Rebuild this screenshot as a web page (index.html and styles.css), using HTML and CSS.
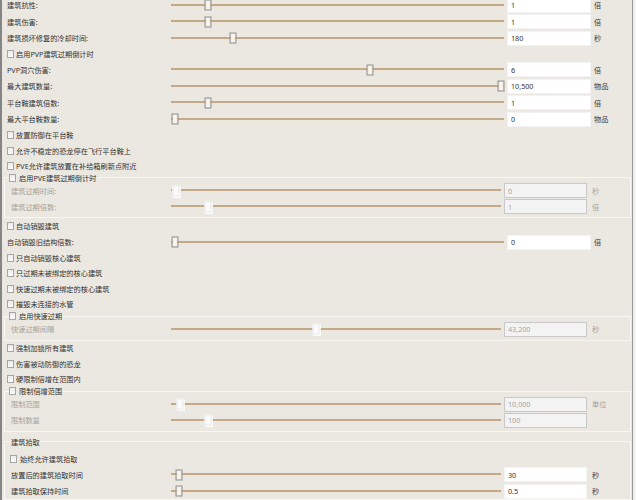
FILE: index.html
```html
<!DOCTYPE html>
<html>
<head>
    <meta charset="utf-8">
    <title>建筑设置</title>
    <link rel="stylesheet" href="styles.css">
</head>
<body>
    <div class="panel">
        <div class="row"><span class="name">建筑抗性:</span><div class="slider"><div class="rail"><span class="thumb" style="left: 10.2%"></span></div></div><input class="num" value="1"><span class="unit">倍</span></div>
        <div class="row"><span class="name">建筑伤害:</span><div class="slider"><div class="rail"><span class="thumb" style="left: 10.2%"></span></div></div><input class="num" value="1"><span class="unit">倍</span></div>
        <div class="row"><span class="name">建筑损坏修复的冷却时间:</span><div class="slider"><div class="rail"><span class="thumb" style="left: 18%"></span></div></div><input class="num" value="180"><span class="unit">秒</span></div>
        <label class="check"><input type="checkbox">启用PVP建筑过期倒计时</label>
        <div class="row"><span class="name">PVP洞穴伤害:</span><div class="slider"><div class="rail"><span class="thumb" style="left: 60%"></span></div></div><input class="num" value="6"><span class="unit">倍</span></div>
        <div class="row"><span class="name">最大建筑数量:</span><div class="slider"><div class="rail"><span class="thumb" style="left: 100%"></span></div></div><input class="num" value="10,500"><span class="unit">物品</span></div>
        <div class="row"><span class="name">平台鞍建筑倍数:</span><div class="slider"><div class="rail"><span class="thumb" style="left: 10.2%"></span></div></div><input class="num" value="1"><span class="unit">倍</span></div>
        <div class="row"><span class="name">最大平台鞍数量:</span><div class="slider"><div class="rail"><span class="thumb" style="left: 0%"></span></div></div><input class="num" value="0"><span class="unit">物品</span></div>
        <label class="check"><input type="checkbox">放置防御在平台鞍</label>
        <label class="check"><input type="checkbox">允许不稳定的恐龙停在飞行平台鞍上</label>
        <label class="check"><input type="checkbox">PVE允许建筑放置在补给箱刷新点附近</label>

        <fieldset class="group" disabled>
            <legend><label class="check"><input type="checkbox">启用PVE建筑过期倒计时</label></legend>
            <div class="row"><span class="name">建筑过期时间:</span><div class="slider"><div class="rail"><span class="thumb" style="left: 0.5%"></span></div></div><input class="num" value="0" disabled><span class="unit">秒</span></div>
            <div class="row"><span class="name">建筑过期倍数:</span><div class="slider"><div class="rail"><span class="thumb" style="left: 10.5%"></span></div></div><input class="num" value="1" disabled><span class="unit">倍</span></div>
        </fieldset>

        <label class="check"><input type="checkbox">自动销毁建筑</label>
        <div class="row"><span class="name">自动销毁旧结构倍数:</span><div class="slider"><div class="rail"><span class="thumb" style="left: 0%"></span></div></div><input class="num" value="0"><span class="unit">倍</span></div>
        <label class="check"><input type="checkbox">只自动销毁核心建筑</label>
        <label class="check"><input type="checkbox">只过期未被绑定的核心建筑</label>
        <label class="check"><input type="checkbox">快速过期未被绑定的核心建筑</label>
        <label class="check"><input type="checkbox">摧毁未连接的水管</label>

        <fieldset class="group" disabled>
            <legend><label class="check"><input type="checkbox">启用快速过期</label></legend>
            <div class="row"><span class="name">快速过期间隔</span><div class="slider"><div class="rail"><span class="thumb" style="left: 43.8%"></span></div></div><input class="num" value="43,200" disabled><span class="unit">秒</span></div>
        </fieldset>

        <label class="check"><input type="checkbox">强制加锁所有建筑</label>
        <label class="check"><input type="checkbox">伤害被动防御的恐龙</label>
        <label class="check"><input type="checkbox">硬限制倍增在范围内</label>

        <fieldset class="group" disabled>
            <legend><label class="check"><input type="checkbox">限制倍增范围</label></legend>
            <div class="row"><span class="name">限制范围</span><div class="slider"><div class="rail"><span class="thumb" style="left: 1.6%"></span></div></div><input class="num" value="10,000" disabled><span class="unit">单位</span></div>
            <div class="row"><span class="name">限制数量</span><div class="slider"><div class="rail"><span class="thumb" style="left: 10.4%"></span></div></div><input class="num" value="100" disabled><span class="unit"></span></div>
        </fieldset>

        <fieldset class="group pickup">
            <legend>建筑拾取</legend>
            <label class="check"><input type="checkbox">始终允许建筑拾取</label>
            <div class="row"><span class="name">放置后的建筑拾取时间</span><div class="slider"><div class="rail"><span class="thumb" style="left: 1.4%"></span></div></div><input class="num" value="30"><span class="unit">秒</span></div>
            <div class="row"><span class="name">建筑拾取保持时间</span><div class="slider"><div class="rail"><span class="thumb" style="left: 1.4%"></span></div></div><input class="num" value="0.5"><span class="unit">秒</span></div>
        </fieldset>
    </div>
</body>
</html>
```

FILE: styles.css
```css
html, body {
    margin: 0;
    padding: 0;
    height: 100%;
    overflow: hidden;
}

body {
    background-color: #f1f1f0;
    font-family: "Noto Sans", "Noto Sans CJK SC", sans-serif;
    font-size: 7.2px;
    color: #333;
}

.panel {
    width: 630px;
    min-height: 520px;
    margin-top: -2.9px;
    background-color: #ebe8e1;
    border-left: 2px solid #858585;
    border-right: 1px solid #959595;
}

/* slider rows: label | track | number box | unit */
.row {
    display: grid;
    grid-template-columns: 164px 333px 87px auto;
    align-items: center;
    height: 16.4px;
    padding-left: 5px;
}

.name {
    white-space: nowrap;
}

.slider {
    position: relative;
    height: 100%;
}

.slider::before {
    content: "";
    position: absolute;
    left: 0;
    right: 0;
    top: 50%;
    height: 3px;
    margin-top: -1.5px;
    background: linear-gradient(#c3aa8a 0 2px, #efe5d8 2px);
}

.rail {
    position: absolute;
    left: 3.5px;
    right: 3.5px;
    top: 0;
    bottom: 0;
}

.thumb {
    position: absolute;
    top: 50%;
    width: 7px;
    height: 11px;
    box-sizing: border-box;
    transform: translate(-50%, -50%);
    border: 1px solid #8f8f8f;
    background: linear-gradient(90deg, #efe6da, #fbf8f4 50%, #efe6da);
}

.num {
    width: 84px;
    height: 15px;
    box-sizing: border-box;
    margin: 0 0 0 3px;
    padding: 0 3px;
    border: 1px solid #f3f3f3;
    background: #fff;
    font-family: inherit;
    font-size: 7.2px;
    color: #333;
    outline: none;
}

.num:disabled {
    background: #f3f3f3;
    border-color: #c9c9c9;
    color: #a3a3a3;
}

.unit {
    padding-left: 3px;
    color: #3a3a3a;
}

/* checkbox rows */
.check {
    display: flex;
    align-items: center;
    height: 15.5px;
    padding-left: 5px;
    white-space: nowrap;
}

.check input {
    appearance: none;
    width: 7px;
    height: 8px;
    margin: 0 2px 0 0;
    border: 1px solid #a6a6a6;
    background: linear-gradient(#ececec, #fbfbfb);
}

/* framed groups */
.group {
    margin: -1px 1px 0 2px;
    padding: 0 0 2.5px 6px;
    border: 1px solid #f8f6f2;
    min-width: 0;
}

.group legend {
    padding: 0;
    margin-left: -2px;
    height: 10px;
}

.group legend .check {
    height: 10px;
    padding-left: 0;
}

.group legend .check input {
    margin-right: 3px;
}

.group .row {
    grid-template-columns: 160px 330px 87px auto;
    height: 16px;
    padding-left: 0;
}

.group .num {
    width: 83px;
}

.group .unit {
    padding-left: 4px;
}

.group[disabled] .name,
.group[disabled] .unit {
    color: #a7a39d;
}

.group[disabled] .thumb {
    border-color: #e9e9e9;
    background: #fbfbfb;
    box-shadow: 0 0 1px 1px rgba(255, 255, 255, 0.8);
}

.pickup {
    margin-top: 3px;
    padding-bottom: 0;
}

.pickup legend {
    margin-left: 0;
    height: 14px;
    line-height: 14px;
    color: #333;
}

.pickup .check {
    height: 16px;
    margin-top: 2px;
    padding-left: 0;
}

.pickup .check input {
    margin-left: -1px;
    margin-right: 3px;
}

.pickup .row {
    height: 16.3px;
}
```
